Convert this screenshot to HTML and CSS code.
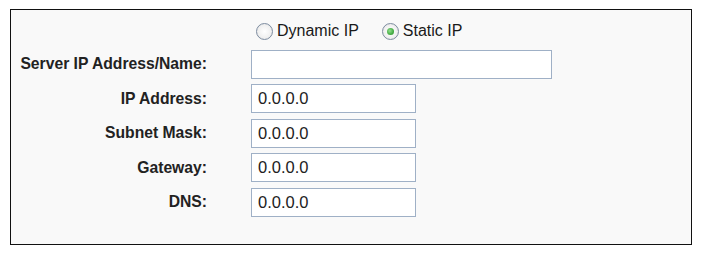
FILE: index.html
```html
<!DOCTYPE html>
<html>
<head>
<meta charset="utf-8">
<link rel="stylesheet" href="styles.css">
</head>
<body>
<div class="panel">
  <div class="form">
    <div></div>
    <div class="radios">
      <label class="radio"><span class="circle"></span><span>Dynamic IP</span></label>
      <label class="radio"><span class="circle checked"></span><span>Static IP</span></label>
    </div>
    <div class="label">Server IP Address/Name:</div>
    <div><span class="input wide"></span></div>
    <div class="label">IP Address:</div>
    <div><span class="input">0.0.0.0</span></div>
    <div class="label">Subnet Mask:</div>
    <div><span class="input">0.0.0.0</span></div>
    <div class="label">Gateway:</div>
    <div><span class="input">0.0.0.0</span></div>
    <div class="label">DNS:</div>
    <div><span class="input">0.0.0.0</span></div>
  </div>
</div>
</body>
</html>
```
FILE: styles.css
```css
html, body { margin: 0; padding: 0; background: #ffffff; }
body { padding: 9px 0 0 10px; font-family: "Liberation Sans", Arial, sans-serif; }
.panel {
  width: 682px;
  height: 236px;
  border: 1px solid #111;
  background: #f9f9f9;
  box-sizing: border-box;
  padding-top: 8px;
}
.form {
  display: grid;
  grid-template-columns: 196px 1fr;
  column-gap: 44px;
  grid-template-rows: 26px 29px 29px 29px 29px 29px;
  row-gap: 5.5px;
}
.radios {
  display: flex;
  align-items: center;
  padding-left: 5px;
  gap: 23px;
  font-size: 16px;
  color: #1a1a1a;
}
.radio { display: flex; align-items: center; gap: 4px; }
.circle {
  width: 15px; height: 15px;
  border-radius: 50%;
  border: 1px solid #7d8ca0;
  background: radial-gradient(circle at 50% 50%, #ffffff 0%, #f0f0f0 60%, #dcdcdc 100%);
  position: relative;
}
.circle.checked::after {
  content: "";
  position: absolute;
  left: 4px; top: 4px;
  width: 7px; height: 7px;
  border-radius: 50%;
  background: radial-gradient(circle at 40% 40%, #8fe08a 0%, #3aa33a 70%, #2a7a2a 100%);
}
.label {
  font-weight: bold;
  font-size: 15.7px;
  color: #222;
  display: flex;
  align-items: center;
  justify-content: flex-end;
}
.input {
  display: flex;
  align-items: center;
  box-sizing: border-box;
  width: 165px;
  height: 29px;
  border: 1px solid #9fb0c6;
  background: #fff;
  padding-left: 6px;
  font-size: 16.5px;
  color: #222;
}
.input.wide { width: 301px; }
```
